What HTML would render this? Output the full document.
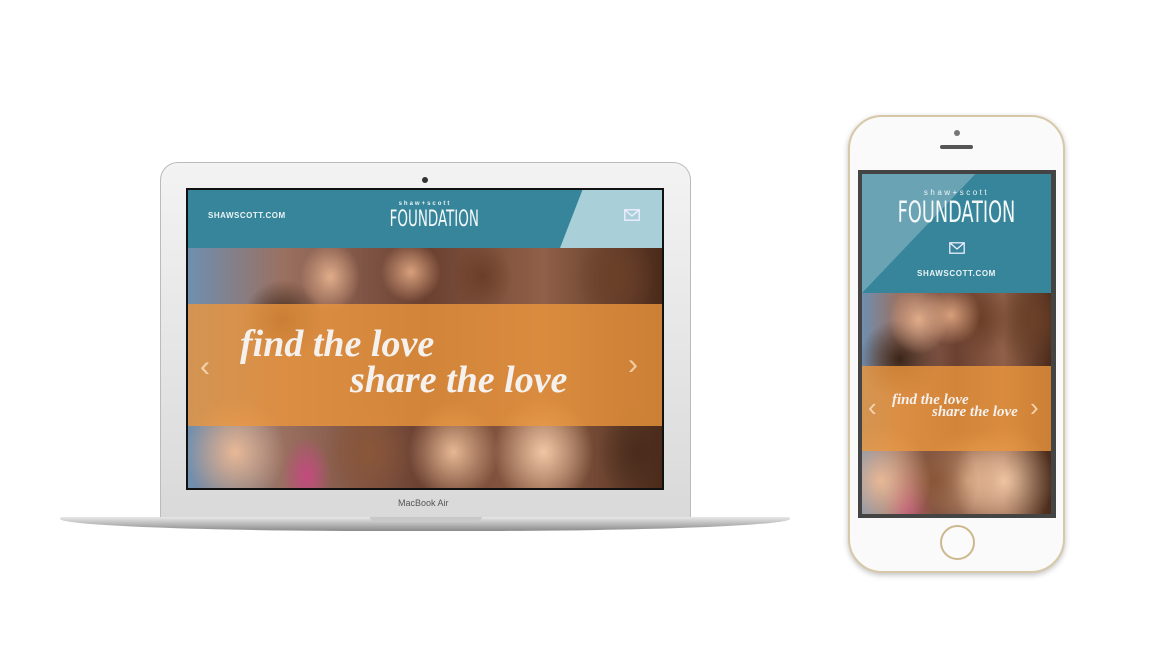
<!DOCTYPE html>
<html><head><meta charset="utf-8"><style>
*{margin:0;padding:0;box-sizing:border-box}
body{width:1152px;height:648px;background:#fff;position:relative;overflow:hidden;font-family:"Liberation Sans",sans-serif}
.abs{position:absolute}
.photo{background:
radial-gradient(ellipse 30px 35px at 30% 12%,#e0ac8a,transparent),
radial-gradient(ellipse 30px 30px at 47% 10%,#d8a07c,transparent),
radial-gradient(ellipse 30px 35px at 62% 12%,#6a3e28,transparent),
radial-gradient(ellipse 40px 45px at 90% 12%,#6a4028,transparent),
radial-gradient(ellipse 40px 40px at 20% 30%,#3a2418,transparent),
radial-gradient(ellipse 50px 55px at 10% 85%,#e8b896,transparent),
radial-gradient(ellipse 45px 50px at 38% 85%,#8a5638,transparent),
radial-gradient(ellipse 45px 50px at 56% 85%,#e6b894,transparent),
radial-gradient(ellipse 50px 55px at 75% 85%,#efc6a4,transparent),
radial-gradient(ellipse 40px 50px at 95% 85%,#4a2c1c,transparent),
radial-gradient(ellipse 25px 40px at 25% 95%,#c44a80,transparent),
linear-gradient(90deg,#6f8fb0 0%,#9a7060 20%,#6b4030 50%,#906048 75%,#4b2a1a 100%)}
.band{background:rgba(236,150,60,.8)}
.script{font-family:"Liberation Serif",serif;font-style:italic;font-weight:bold;color:#f4f1ee;white-space:nowrap}
.fnd{font-family:'DejaVu Sans Condensed','Liberation Sans Narrow',sans-serif;font-weight:200;color:#f4f8f9;text-align:center}
</style></head><body>
<!-- laptop -->
<div class="abs" style="left:160px;top:162px;width:531px;height:358px;border-radius:18px 18px 0 0;background:linear-gradient(#f3f3f3,#d9d9d9);border:1px solid #bbb"></div>
<div class="abs" style="left:422px;top:177px;width:6px;height:6px;border-radius:50%;background:#333"></div>
<div class="abs" style="left:186px;top:188px;width:478px;height:302px;background:#111"></div>
<div class="abs" style="left:188px;top:190px;width:474px;height:58px;background:#37859b"></div>
<div class="abs" style="left:560px;top:190px;width:102px;height:58px;background:#a9cfd8;clip-path:polygon(22% 0,100% 0,100% 100%,0 100%)"></div>
<div class="abs" style="left:208px;top:211px;font-size:8px;color:#eaf3f5;font-weight:bold;letter-spacing:.5px">SHAWSCOTT.COM</div>
<div class="abs" style="left:388px;top:201px;width:74px;text-align:center;font-size:6px;color:#eaf3f5;letter-spacing:2px;font-weight:bold">shaw+scott</div>
<div class="abs fnd" style="left:373px;top:207px;width:104px;font-size:22px;transform:scaleX(.68)">FOUNDATION</div>
<svg class="abs" style="left:624px;top:209px" width="16" height="12"><rect x=".8" y=".8" width="14.4" height="10.4" fill="none" stroke="#eef" stroke-width="1.4"/><path d="M1 1l7 6 7-6" fill="none" stroke="#eef" stroke-width="1.4"/></svg>
<div class="abs photo" style="left:188px;top:248px;width:474px;height:240px"></div>
<div class="abs band" style="left:188px;top:304px;width:474px;height:122px"></div>
<div class="abs script" style="left:240px;top:322px;font-size:38px">find the love</div>
<div class="abs script" style="left:350px;top:358px;font-size:38px">share the love</div>
<div class="abs" style="left:200px;top:350px;font-size:30px;color:rgba(255,235,210,.7)">‹</div>
<div class="abs" style="left:628px;top:348px;font-size:30px;color:rgba(255,235,210,.7)">›</div>
<div class="abs" style="left:398px;top:498px;font-size:9px;color:#555">MacBook Air</div>
<div class="abs" style="left:60px;top:517px;width:730px;height:14px;background:linear-gradient(#e8e8e8,#8a8a8a);border-radius:2px 2px 50% 50%/2px 2px 100% 100%"></div>
<div class="abs" style="left:370px;top:517px;width:112px;height:4px;background:#c8c8c8;border-radius:0 0 4px 4px"></div>
<!-- phone -->
<div class="abs" style="left:848px;top:115px;width:217px;height:458px;border-radius:34px;background:#fafafa;border:2px solid #d7c8a8;box-shadow:0 2px 6px rgba(0,0,0,.25)"></div>
<div class="abs" style="left:954px;top:130px;width:6px;height:6px;border-radius:50%;background:#777"></div>
<div class="abs" style="left:940px;top:145px;width:33px;height:4px;border-radius:2px;background:#555"></div>
<div class="abs" style="left:858px;top:170px;width:198px;height:348px;background:#444"></div>
<div class="abs" style="left:862px;top:174px;width:189px;height:119px;background:#37859b"></div>
<div class="abs" style="left:862px;top:174px;width:189px;height:119px;background:rgba(255,255,255,.25);clip-path:polygon(0 0,60% 0,0 100%)"></div>
<div class="abs" style="left:862px;top:188px;width:189px;text-align:center;font-size:8px;color:#f0f6f8;letter-spacing:2.5px">shaw+scott</div>
<div class="abs fnd" style="left:862px;top:195px;width:189px;font-size:29px;transform:scaleX(.68)">FOUNDATION</div>
<svg class="abs" style="left:949px;top:242px" width="16" height="12"><rect x=".8" y=".8" width="14.4" height="10.4" fill="none" stroke="#eef" stroke-width="1.3"/><path d="M1 1l7 6 7-6" fill="none" stroke="#eef" stroke-width="1.3"/></svg>
<div class="abs" style="left:862px;top:269px;width:189px;text-align:center;font-size:8px;color:#eaf3f5;font-weight:bold;letter-spacing:.6px">SHAWSCOTT.COM</div>
<div class="abs photo" style="left:862px;top:293px;width:189px;height:221px"></div>
<div class="abs band" style="left:862px;top:366px;width:189px;height:85px"></div>
<div class="abs script" style="left:892px;top:392px;font-size:15px">find the love</div>
<div class="abs script" style="left:932px;top:404px;font-size:15px">share the love</div>
<div class="abs" style="left:868px;top:392px;font-size:26px;color:rgba(255,235,210,.75)">‹</div>
<div class="abs" style="left:1030px;top:392px;font-size:26px;color:rgba(255,235,210,.75)">›</div>
<div class="abs" style="left:940px;top:525px;width:35px;height:35px;border-radius:50%;border:2px solid #cdb88e;background:#fbfbfb"></div>
</body></html>
